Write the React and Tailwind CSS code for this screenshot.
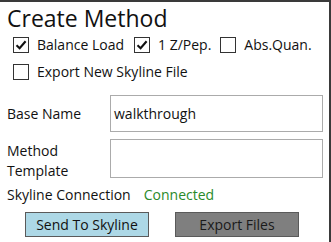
import React from "react";

function Box({ checked }) {
  return (
    <span className="flex h-[16px] w-[16px] shrink-0 items-center justify-center border border-[#333333] bg-white">
      {checked && (
        <svg width="12" height="12" viewBox="0 0 12 12">
          <path d="M1.5 6.2 L4.6 9.2 L10.6 2.2" fill="none" stroke="#111" strokeWidth="2.1" />
        </svg>
      )}
    </span>
  );
}

function Check({ checked, label, className = "" }) {
  return (
    <div className={"flex items-center gap-[8px] " + className}>
      <Box checked={checked} />
      <span className="whitespace-nowrap">{label}</span>
    </div>
  );
}

export default function App() {
  return (
    <div
      className="relative h-[242px] w-[331px] overflow-hidden border-t-2 border-r-2 border-[#3a3a3a] bg-white text-[14px] text-[#111]"
      style={{ fontFamily: '"Open Sans", "Noto Sans", sans-serif' }}
    >
      <div className="pl-[7px] pt-[1px] text-[23px] leading-[30px]">Create Method</div>
      <div className="mt-[2px] flex h-[20px] items-center pl-[13px] leading-[20px]">
        <Check checked label="Balance Load" />
        <Check checked label="1 Z/Pep." className="ml-[10px]" />
        <Check label="Abs.Quan." className="ml-[9px]" />
      </div>
      <div className="mt-[7px] flex h-[20px] items-center pl-[13px] leading-[20px]">
        <Check label="Export New Skyline File" />
      </div>
      <div className="mt-[13px] flex items-center pl-[7px]">
        <div className="w-[103px]">Base Name</div>
        <div className="flex h-[37px] w-[213px] items-center border border-[#ababab] pl-[3px]">walkthrough</div>
      </div>
      <div className="mt-[7px] flex h-[39px] items-start pl-[7px]">
        <div className="w-[103px] pt-[2px] leading-[20px]">
          Method
          <br />
          Template
        </div>
        <div className="h-[39px] w-[213px] border border-[#ababab]"></div>
      </div>
      <div className="mt-[7px] flex h-[20px] items-center pl-[7px] leading-[20px]">
        <span>Skyline Connection</span>
        <span className="ml-[13px] text-[#2a8a2a]">Connected</span>
      </div>
      <div className="mt-[7px] flex gap-[26px] pl-[25px]">
        <div className="flex h-[25px] w-[124px] items-center justify-center border border-[#5a5a5a] bg-[#add8e6]">
          Send To Skyline
        </div>
        <div className="flex h-[25px] w-[124px] items-center justify-center border border-[#5a5a5a] bg-[#7f7f7f] text-[#1a1a1a]">
          Export Files
        </div>
      </div>
    </div>
  );
}
